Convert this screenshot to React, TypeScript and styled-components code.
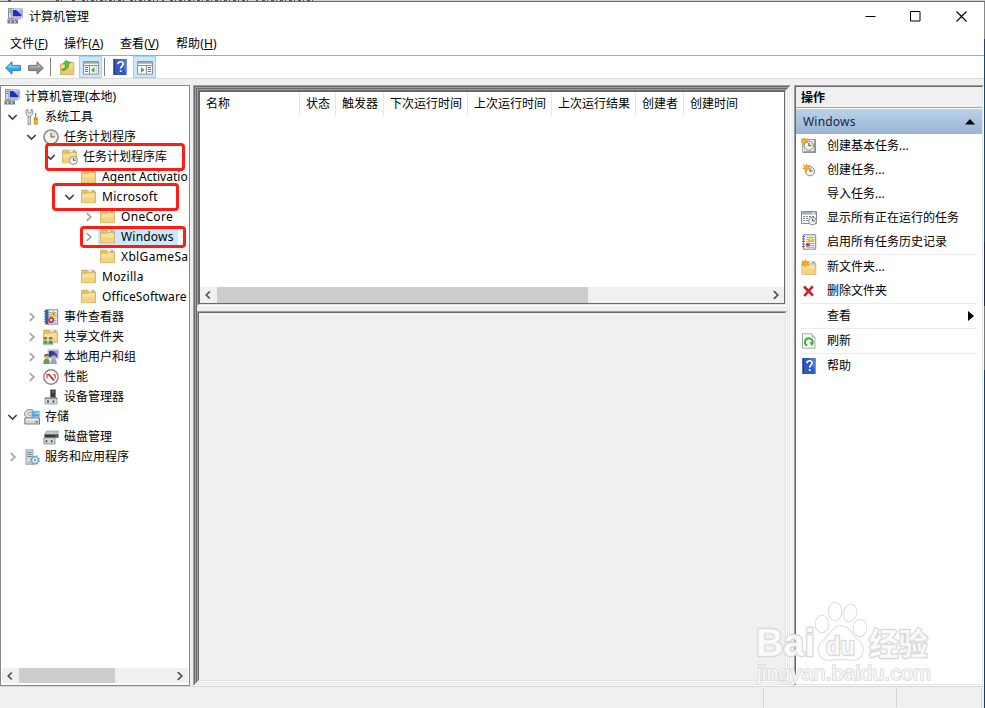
import React from "react";
import styled, { createGlobalStyle, css } from "styled-components";

const Global = createGlobalStyle`
  * { box-sizing: border-box; }
  html, body { margin: 0; padding: 0; overflow: hidden; }
  body {
    font-family: "Noto Sans", "Noto Sans CJK SC", sans-serif;
    font-size: 12px;
    color: #000;
    background: #fff;
  }
  svg { display: block; flex: none; }
`;

/* ---------- icons ---------- */

const Svg = ({ children, size = 16 }: { children: React.ReactNode; size?: number }) => (
  <svg width={size} height={size} viewBox="0 0 16 16">{children}</svg>
);

const FolderShape = () => (
  <>
    <path d="M.8 1.2h5.6l1.2 1.3h6.6v10.9H.8z" fill="#e6c46a" stroke="#c49c48" strokeWidth=".8" />
    <path d="M7.8 1h6v2.4h-6z" fill="#fff" stroke="#c8b27c" strokeWidth=".5" />
    <path d="M10.6 1.6H13v1.2h-2.4z" fill="#3e9be0" />
    <path d="M.6 4.2h6.7l1-.8h6v10.3H.6z" fill="#f8e09b" stroke="#cfa851" strokeWidth=".7" />
    <path d="M1 8.5h13v4.8H1z" fill="#f2d381" />
  </>
);

const ClockShape = ({ cx = 8, cy = 8, r = 7 }) => (
  <>
    <circle cx={cx} cy={cy} r={r} fill="#f6f3e8" stroke="#858b90" strokeWidth={r > 5 ? 1.6 : 1} />
    <path d={`M${cx} ${cy}V${cy - r * 0.7}A${r * 0.7} ${r * 0.7} 0 0 1 ${cx + r * 0.7} ${cy}z`} fill="#f5d9a0" />
    <path d={`M${cx} ${cy - r * 0.6}V${cy}H${cx + r * 0.55}`} fill="none" stroke="#3f5f86" strokeWidth="1" />
  </>
);

const SparkShape = ({ cx = 4, cy = 4 }) => (
  <g transform={`translate(${cx} ${cy})`}>
    <path d="M0-4 1-1.3 3.5-2.6 1.9 0 4 1.5 1 1.4 0 4-1.1 1.4-4 1.4-1.9-.2-3.4-2.9-.9-1.4z" fill="#f59b13" stroke="#f59b13" strokeWidth=".6" />
    <circle r="1.2" fill="#ffc04b" />
  </g>
);

const PersonShape = ({ x = 0, color = "#5f9d4b" }) => (
  <g transform={`translate(${x} 0)`}>
    <path d="M.4 15c0-4 1.2-5.2 3.2-5.2S6.8 11 6.8 15z" fill={color} />
    <circle cx="3.6" cy="7.5" r="2.4" fill="#d9a679" />
    <path d="M1.2 7.5C.8 4.5 6 3.8 6.2 7.3 5 6 3 6 1.2 7.5z" fill="#51361f" />
  </g>
);

const NoteShape = () => (
  <>
    <path d="M2.5.8h12.2v14.4H2.5z" fill="#f1f5fa" stroke="#7388a5" />
    <path d="M5.5 3.5h8M5.5 5.5h8M5.5 7.5h8M5.5 9.5h8M5.5 11.5h8M5.5 13.3h8" stroke="#7e9cc4" strokeWidth=".8" />
    <path d="M1 2.5h3M1 5h3M1 7.5h3M1 10h3M1 12.5h3" stroke="#6a7077" strokeWidth="1" />
  </>
);

const icons: Record<string, React.ReactNode> = {
  computer: (
    <Svg>
      <path d="M1.5.5h5v10h-5z" fill="#d6d9dc" stroke="#8b9095" />
      <path d="M2.5 2.5h3M2.5 4.5h3" stroke="#777" />
      <path d="M4.5.7h11v9h-11z" fill="#d8dde4" stroke="#9aa2ad" strokeWidth=".7" />
      <path d="M5.8 2h8.6v6.3H5.8z" fill="#1b2fc6" />
      <path d="M9 2h5.4v5z" fill="#9fb3f3" />
      <path d="M8 9.5h5l1.5 2H7z" fill="#b1b5ba" />
      <path d="M.5 11h10.5v4.5H.5z" fill="#707b82" />
      <path d="M.5 11h10.5v1.5H.5z" fill="#aab1b6" />
      <path d="M3 13h1.5v1.5H3zM7 13h1.5v1.5H7z" fill="#e8ecee" />
    </Svg>
  ),
  tools: (
    <Svg>
      <path d="M4 7.5h2.6v8H4z" fill="#d3d5d6" stroke="#84898c" strokeWidth=".8" />
      <path d="M2 1.2v3.6L4 7.7h2.6l2.2-2.9V1.2L7 .5V4H4V.5z" fill="#e3e5e6" stroke="#7d8285" strokeWidth=".8" />
      <path d="M11.7 4v5" stroke="#8a8a8a" strokeWidth="1.3" />
      <path d="M10.2 8.5h3v6.7h-3z" fill="#f4b72c" stroke="#c88812" strokeWidth=".8" />
      <path d="M10.2 10.3h3" stroke="#9c6a08" strokeWidth=".7" />
    </Svg>
  ),
  clock: <Svg><ClockShape /></Svg>,
  folder: <Svg><FolderShape /></Svg>,
  folderClock: <Svg><FolderShape /><ClockShape cx={11.4} cy={11.4} r={4} /></Svg>,
  event: (
    <Svg>
      <NoteShape />
      <path d="M2.5 1h3v14h-3z" fill="#3f5f95" />
      <path d="M10.5 2l3.3 5.5H7.2z" fill="#ffd52e" stroke="#d49f12" strokeWidth=".5" />
      <path d="M10.5 4v1.7" stroke="#333" strokeWidth=".8" />
      <circle cx="8.2" cy="11" r="3" fill="#d8323b" />
      <path d="M7 9.8l2.4 2.4M9.4 9.8L7 12.2" stroke="#fff" />
    </Svg>
  ),
  shared: (
    <Svg>
      <FolderShape />
      <g transform="translate(0 5) scale(.66)"><PersonShape color="#3da56a" /><PersonShape x={8} color="#3d87a5" /></g>
      <path d="M0 15h10" stroke="#63be84" strokeWidth="1.4" />
    </Svg>
  ),
  users: (
    <Svg>
      <path d="M5 .8h10.3v8.5H5z" fill="#c5ccd6" stroke="#98a1ad" strokeWidth=".6" />
      <path d="M6 2h8.2v6H6z" fill="#2037bd" />
      <path d="M10 2h4.2v4z" fill="#8294e6" />
      <PersonShape /><PersonShape x={7} color="#8fa6c8" />
    </Svg>
  ),
  performance: (
    <Svg>
      <circle cx="8" cy="8" r="7.2" fill="#fff" stroke="#858585" strokeWidth="1.4" />
      <path d="M4 9.5V5.5h2M10.5 5l1.7 1.5v3" fill="none" stroke="#c92530" strokeWidth="1.1" />
      <path d="M5.5 5l5.5 6.5" stroke="#e01b22" strokeWidth="1.9" />
    </Svg>
  ),
  device: (
    <Svg>
      <path d="M7.5.8h5V9h-5z" fill="#363b3e" stroke="#666" strokeWidth=".6" />
      <path d="M9.5 2.2H11v1.6H9.5z" fill="#3ddc45" />
      <path d="M2 9h12v6H2z" fill="#d9dcdd" stroke="#878b8e" strokeWidth=".8" />
      <path d="M1.7 8.5h12.6v1.6H1.7z" fill="#8b9093" />
      <path d="M4 11.5h2v2H4zM9.5 11.5h2v2h-2z" fill="#45494c" />
    </Svg>
  ),
  storage: (
    <Svg>
      <ellipse cx="6" cy="5" rx="5.5" ry="4.5" fill="#d9dddf" stroke="#8b9296" />
      <circle cx="6" cy="5" r="1.5" fill="#fff" stroke="#7a8790" strokeWidth=".7" />
      <path d="M7.5 2h8.2v6H7.5z" fill="#4ba9d2" stroke="#c0c9cf" strokeWidth=".8" />
      <path d="M8.3 5l6.5-2v2z" fill="#a9e2f5" />
      <path d="M.8 9h14.7v6H.8z" fill="#d5d8da" stroke="#6b7175" strokeWidth=".9" />
      <path d="M2 10.3h12" stroke="#f9f9f9" />
      <path d="M11.5 12h2.5v1.6h-2.5z" fill="#28b32c" />
    </Svg>
  ),
  disk: (
    <Svg>
      <path d="M3.5 2h12l-1 4h-13z" fill="#c3c7c9" stroke="#8c9194" strokeWidth=".6" />
      <path d="M1.5 5.5h14v3.2h-14z" fill="#33383a" />
      <path d="M12.3 6.5h2v1h-2z" fill="#47d847" />
      <path d="M.8 8.9H12v6H.8z" fill="#d8dbdc" stroke="#7c8184" strokeWidth=".8" />
      <path d="M2.5 11.3h1.8v2H2.5zM7.8 11.3h1.8v2H7.8z" fill="#45494c" />
    </Svg>
  ),
  services: (
    <Svg>
      <path d="M2 .8h7v14.5H2z" fill="#d2dadd" stroke="#879299" strokeWidth=".8" />
      <path d="M3.3 3.5h4.5M3.3 5.5h4.5M3.3 7.5h4.5" stroke="#637984" strokeWidth=".9" />
      <circle cx="11" cy="11.2" r="3.4" fill="#e1eef7" stroke="#7fa5c3" strokeWidth="1.5" />
      <circle cx="11" cy="11.2" r="4.3" fill="none" stroke="#7fa5c3" strokeWidth="1.3" strokeDasharray="1.7 1.7" />
      <circle cx="11" cy="11.2" r="1.1" fill="#6d94b3" />
      <circle cx="5.4" cy="13.8" r="1.7" fill="#a8c4d9" />
    </Svg>
  ),
  back: (
    <Svg>
      <path d="M.6 9L7 2.8v3.6h8.4v5.2H7v3.6z" fill="#37a6e3" stroke="#2378af" strokeWidth=".9" />
      <path d="M2.3 8.6L6.2 4.8v2.4h8.2v1.4z" fill="#8cd8f7" />
    </Svg>
  ),
  forward: (
    <Svg>
      <path d="M15.4 9L9 2.8v3.6H.6v5.2H9v3.6z" fill="#8c8f90" stroke="#66696a" strokeWidth=".9" />
      <path d="M13.7 8.6L9.8 4.8v2.4H1.6v1.4z" fill="#b5b8b9" />
    </Svg>
  ),
  up: (
    <Svg>
      <path d="M1.5 5h5l1-1.5h7.3V15.5H1.5z" fill="#f6d987" stroke="#cba24f" strokeWidth=".8" />
      <path d="M2 10h12.4v5H2z" fill="#ecc974" />
      <path d="M2.8 10.2c3.2-.8 4.2-3 3.4-5.6L4 4.9 6.8 1.6l5 2L9.5 4.4c.7 4-2 6.6-5.9 7.4z" fill="#5bc63d" stroke="#2f8b25" strokeWidth=".6" />
    </Svg>
  ),
  help: (
    <Svg>
      <path d="M1.5 0h13v16h-13z" fill="#3358c0" />
      <path d="M1.5 0H3v16H1.5z" fill="#23388d" />
      <path d="M8.5 0h6v16z" fill="#4d78d4" />
      <path d="M6 5.3C6 2 11.2 2.1 11.1 5c0 2-2.4 2.2-2.4 4.4" fill="none" stroke="#fff" strokeWidth="1.6" />
      <path d="M7.8 11.2h1.8V13H7.8z" fill="#fff" />
    </Svg>
  ),
  paneLeft: (
    <Svg>
      <path d="M.5 2.5h15v12.7H.5z" fill="#f7f7f7" stroke="#8d9196" />
      <path d="M1 3h14v1.7H1z" fill="#a4a9ae" /><path d="M1 6.5h14M6.5 7v8" stroke="#8d9196" />
      <path d="M2 8.5h3M2 10.5h3M2 12.5h3" stroke="#4b73aa" />
      <path d="M8 11L11.5 8.2v5.6z" fill="#37af36" />
      <path d="M13.2 7v8" stroke="#c6cacd" />
    </Svg>
  ),
  paneRight: (
    <Svg>
      <path d="M.5 2.5h15v12.7H.5z" fill="#f7f7f7" stroke="#8d9196" />
      <path d="M1 3h14v1.7H1z" fill="#a4a9ae" /><path d="M1 6.5h14M9.5 7v8" stroke="#8d9196" />
      <path d="M11 8.5h3M11 10.5h3M11 12.5h3" stroke="#4b73aa" />
      <path d="M7.5 11L4 8.2v5.6z" fill="#37af36" />
    </Svg>
  ),
  basicTask: (
    <Svg>
      <path d="M1.7 1.5h12.8v13H1.7z" fill="#e9e9e6" stroke="#95999c" />
      <path d="M13.8 2v12H3" fill="none" stroke="#8c8f90" strokeWidth="1.3" />
      <ClockShape cx={7.8} cy={7.7} r={4.6} /><SparkShape cx={3} cy={3.2} />
    </Svg>
  ),
  task: <Svg><ClockShape cx={9} cy={9.2} r={4.6} /><SparkShape cx={5.5} cy={5.6} /></Svg>,
  running: (
    <Svg>
      <path d="M.5 1.5h15v12H.5z" fill="#fff" stroke="#858b91" />
      <path d="M1 2h14v2.5H1z" fill="#a4abb3" />
      <path d="M11 3h3" stroke="#fff" />
      <path d="M2 6.5h12M2 8.5h12M2 10.5h12" stroke="#7e8791" strokeDasharray="2 1" />
      <ClockShape cx={11.5} cy={11} r={3.9} />
    </Svg>
  ),
  history: (
    <Svg>
      <NoteShape />
      <path d="M10 2l3 5H7z" fill="#ffda3d" stroke="#d7a316" strokeWidth=".5" />
      <circle cx="6.8" cy="10.8" r="2" fill="#d7333c" />
    </Svg>
  ),
  newFolder: <Svg><g transform="translate(.4 1.5)"><FolderShape /></g><SparkShape cx={4.3} cy={4.6} /></Svg>,
  remove: <Svg><path d="M3 3.5l9 9.2M11.7 3.3L3.2 13" stroke="#cf1d24" strokeWidth="2.6" /></Svg>,
  refresh: (
    <Svg>
      <path d="M1.5.8h9.5l3 3.3v11.1H1.5z" fill="#fafafa" stroke="#a0a0a0" strokeWidth=".9" />
      <path d="M11 .8v3.3h3" fill="#e5e5e5" stroke="#a0a0a0" strokeWidth=".8" />
      <path d="M6.2 12.6A3.8 3.8 0 1 1 11.6 9.5" fill="none" stroke="#2fb139" strokeWidth="1.9" />
      <path d="M8.4 9.3h5L10.7 13z" fill="#2fb139" />
    </Svg>
  ),
};

const Chevron = ({ dir, color = "#404040" }: { dir: "down" | "right" | "left"; color?: string }) => {
  const d = { down: "M1.3 3 5.5 7 9.7 3", right: "M3.8 1.2 7.8 5 3.8 8.8", left: "M6.8 1.5 3.3 5 6.8 8.5" }[dir];
  return (
    <svg width="11" height="10" viewBox="0 0 11 10">
      <path d={d} fill="none" stroke={color} strokeWidth="1.7" />
    </svg>
  );
};

/* ---------- window frame ---------- */

const Screen = styled.div`
  width: 985px;
  height: 708px;
  display: grid;
  grid-template: 2px 706px / 984px 1px;
  overflow: hidden;
`;
const BackdropStrip = styled.div`
  grid-column: 1 / 3;
  background: #d2d2d2;
  border-bottom: 1px solid #6b6b6b;
`;
const BackdropEdge = styled.div`
  background: linear-gradient(#888 0 37px, #22406a 37px 52px, #0c4a6e 52px 240px, #1b2b4a 240px 304px, #777 304px 368px, #123e6b 368px);
`;
const Window = styled.div`
  display: flex;
  flex-direction: column;
  background: #f0f0f0;
`;
const TitleBar = styled.div`
  height: 31px;
  display: flex;
  align-items: center;
  padding: 0 0 3px 7px;
  background: #fff;
`;
const Title = styled.span`
  flex: 1;
  padding: 2px 0 0 6px;
  line-height: 18px;
`;
const Caption = styled.div`
  width: 45.6px;
  display: flex;
  justify-content: center;
`;
const MenuBar = styled.div`
  height: 22px;
  display: flex;
  padding-left: 10px;
  background: #fff;
  line-height: 22px;
`;
const MenuItem = styled.div<{ $w: number }>`
  width: ${(p) => p.$w}px;
  white-space: nowrap;
  letter-spacing: 0.1px;
  u { text-underline-offset: 1px; }
`;
const ToolBar = styled.div`
  height: 24px;
  display: flex;
  align-items: center;
  padding-left: 5px;
  background: #fff;
  border-top: 1px solid #a9a9ad;
  border-bottom: 1px solid #dadada;
`;
const ToolButton = styled.div<{ $w: number; $on?: boolean }>`
  width: ${(p) => p.$w}px;
  height: 22px;
  display: flex;
  align-items: center;
  justify-content: ${(p) => (p.$on ? "center" : "flex-start")};
  ${(p) => p.$on && css`background: #cce8ff; border: 1px solid #99d1ff;`}
`;
const ToolDivider = styled.div<{ $gap: number }>`
  width: 1px;
  height: 18px;
  margin-right: ${(p) => p.$gap}px;
  background: #7d7d7d;
`;
const Body = styled.div`
  height: 607px;
  display: flex;
  padding-top: 6px;
`;

/* ---------- tree ---------- */

const TreePanel = styled.div`
  position: relative;
  width: 190px;
  height: 601px;
  margin-right: 3px;
  padding: 1px 1px 2px;
  display: flex;
  flex-direction: column;
  border: 1px solid #828790;
  background: #fff;
`;
const TreeRows = styled.div`
  flex: 1;
  overflow: hidden;
`;
const TreeRow = styled.div<{ $level: number }>`
  height: 20px;
  display: flex;
  align-items: center;
  padding-left: ${(p) => (p.$level === 0 ? 0 : p.$level * 19 - 14)}px;
`;
const Toggle = styled.div`
  flex: none;
  width: 15px;
  display: flex;
  align-items: center;
`;
const Node = styled.div<{ $selected?: boolean }>`
  flex: none;
  height: 20px;
  display: flex;
  align-items: center;
  padding: 0 4px 0 2px;
  gap: 5px;
  white-space: nowrap;
  background: ${(p) => (p.$selected ? "#cce8ff" : "transparent")};
`;
const NodeText = styled.span<{ $spacing: number }>`
  line-height: 20px;
  letter-spacing: ${(p) => p.$spacing}px;
`;
const Marker = styled.div<{ $x: number; $y: number; $w: number; $h: number }>`
  position: absolute;
  left: ${(p) => p.$x}px;
  top: ${(p) => p.$y}px;
  width: ${(p) => p.$w}px;
  height: ${(p) => p.$h}px;
  border: 3px solid #fe1c14;
  border-radius: 4px;
`;
const ScrollBar = styled.div<{ $h: number }>`
  height: ${(p) => p.$h}px;
  display: flex;
  align-items: center;
  background: #f0f0f0;
`;
const ScrollArrow = styled.div<{ $end?: boolean }>`
  width: 17px;
  display: flex;
  justify-content: center;
  margin-left: ${(p) => (p.$end ? "auto" : 0)};
`;
const Thumb = styled.div<{ $w: number }>`
  width: ${(p) => p.$w}px;
  align-self: stretch;
  background: #cdcdcd;
`;

/* ---------- centre ---------- */

const Sunken = styled.div`
  border: 1px solid;
  border-color: #a0a0a0 #fff #fff #a0a0a0;
  display: flex;
`;
const SunkenInner = styled.div`
  flex: 1;
  min-width: 0;
  display: flex;
  flex-direction: column;
  border: 1px solid;
  border-color: #696969 #e3e3e3 #e3e3e3 #696969;
`;
const Centre = styled(Sunken)`
  width: 598px;
  height: 601px;
  margin-right: 3px;
`;
const CentreFill = styled(Sunken)`flex: 1;`;
const ListFrame = styled(Sunken)`
  height: 217px;
  margin-bottom: 5px;
`;
const DetailFrame = styled(Sunken)`flex: 1;`;
const ListView = styled.div`
  flex: 1;
  display: flex;
  flex-direction: column;
  justify-content: space-between;
  border: 1px solid #696969;
  background: #fff;
`;
const HeaderRow = styled.div`
  height: 24px;
  display: flex;
`;
const HeaderCell = styled.div<{ $w: number }>`
  width: ${(p) => p.$w}px;
  padding-left: 6px;
  line-height: 24px;
  white-space: nowrap;
  border-right: 1px solid #e5e5e5;
  &:last-child { border-right: 0; }
`;

/* ---------- actions ---------- */

const Actions = styled(Sunken)`
  width: 190px;
  height: 601px;
`;
const ActionsInner = styled(SunkenInner)`background: #fff;`;
const ActionsTitle = styled.div`
  height: 21px;
  margin-bottom: 1px;
  padding-left: 5px;
  font-weight: 700;
  line-height: 21px;
  background: #f0f0f0;
  border-bottom: 1px solid #a0a0a0;
`;
const ActionsGroup = styled.div`
  height: 25px;
  display: flex;
  align-items: center;
  justify-content: space-between;
  padding: 0 7px 0 7px;
  letter-spacing: 0.2px;
  color: #14284a;
  background: linear-gradient(#bad2eb, #9ab4d3);
`;
const ActionRow = styled.div`
  height: 24px;
  display: flex;
  align-items: center;
  padding: 0 8px 0 5px;
  white-space: nowrap;
`;
const ActionIcon = styled.div`
  width: 26px;
`;
const ActionText = styled.span`
  flex: 1;
  line-height: 22px;
`;
const Separator = styled.div`
  height: 1px;
  margin: 0 5px;
  background: #ebebeb;
`;
const StatusBar = styled.div`
  height: 22px;
  display: flex;
  border-top: 1px solid #d7d7d7;
`;
const StatusCell = styled.div<{ $w: number }>`
  width: ${(p) => p.$w}px;
  margin-top: 1px;
  height: 19px;
  border-right: 1px solid #d4d4d4;
`;
const Watermark = styled.svg`
  position: absolute;
  left: 750px;
  top: 596px;
  font-family: "Liberation Sans", "Noto Sans CJK SC", sans-serif;
  paint-order: stroke;
`;

type TreeItem = [level: number, icon: string, text: string, state?: "open" | "closed", selected?: boolean, spacing?: number];
const tree: TreeItem[] = [
  [0, "computer", "计算机管理(本地)"],
  [1, "tools", "系统工具", "open"],
  [2, "clock", "任务计划程序", "open"],
  [3, "folderClock", "任务计划程序库", "open"],
  [4, "folder", "Agent Activatio", undefined, false, 0.05],
  [4, "folder", "Microsoft", "open", false, 0.3],
  [5, "folder", "OneCore", "closed", false, 0.3],
  [5, "folder", "Windows", "closed", true, 0.2],
  [5, "folder", "XblGameSa", undefined, false, 0.35],
  [4, "folder", "Mozilla", undefined, false, 0.3],
  [4, "folder", "OfficeSoftware", undefined, false, 0.1],
  [2, "event", "事件查看器", "closed"],
  [2, "shared", "共享文件夹", "closed"],
  [2, "users", "本地用户和组", "closed"],
  [2, "performance", "性能", "closed"],
  [2, "device", "设备管理器"],
  [1, "storage", "存储", "open"],
  [2, "disk", "磁盘管理"],
  [1, "services", "服务和应用程序", "closed"],
];

const columns: [string, number][] = [
  ["名称", 100], ["状态", 36], ["触发器", 48], ["下次运行时间", 84],
  ["上次运行时间", 84], ["上次运行结果", 84], ["创建者", 48], ["创建时间", 80],
];

const actions: ([string | null, string, boolean?] | "-")[] = [
  ["basicTask", "创建基本任务..."], ["task", "创建任务..."], [null, "导入任务..."],
  ["running", "显示所有正在运行的任务"], ["history", "启用所有任务历史记录"], "-",
  ["newFolder", "新文件夹..."], ["remove", "删除文件夹"], "-",
  [null, "查看", true], "-", ["refresh", "刷新"], "-", ["help", "帮助"],
];

const menus: [string, string, number][] = [
  ["文件", "F", 54], ["操作", "A", 56], ["查看", "V", 56], ["帮助", "H", 56],
];

export default function App() {
  return (
    <>
      <Global />
      <Screen>
        <BackdropStrip>
          <svg width="320" height="1"><path d="M8 .5h4M56 .5h9M72 .5h5M82 .5h44M130 .5h28M162 .5h2M170 .5h80M256 .5h2M262 .5h52" stroke="#555" strokeDasharray="3 2 1 3" /></svg>
        </BackdropStrip>
        <Window>
          <TitleBar>
            {icons.computer}
            <Title>计算机管理</Title>
            <Caption><svg width="11" height="11"><path d="M.5 5.5h10" stroke="#000" /></svg></Caption>
            <Caption><svg width="11" height="11"><path d="M.5.5h9.5v9.5H.5z" fill="none" stroke="#000" /></svg></Caption>
            <Caption><svg width="11" height="11"><path d="M.5.5l10 10M10.5.5l-10 10" stroke="#000" strokeWidth="1.1" /></svg></Caption>
          </TitleBar>
          <MenuBar>
            {menus.map(([t, k, w]) => <MenuItem key={k} $w={w}>{t}(<u>{k}</u>)</MenuItem>)}
          </MenuBar>
          <ToolBar>
            <ToolButton $w={23}>{icons.back}</ToolButton>
            <ToolButton $w={22}>{icons.forward}</ToolButton>
            <ToolDivider $gap={8} />
            <ToolButton $w={20}>{icons.up}</ToolButton>
            <ToolButton $w={23} $on>{icons.paneLeft}</ToolButton>
            <ToolButton $w={2} />
            <ToolDivider $gap={7} />
            <ToolButton $w={21}>{icons.help}</ToolButton>
            <ToolButton $w={23} $on>{icons.paneRight}</ToolButton>
          </ToolBar>
          <Body>
            <TreePanel>
              <TreeRows>
                {tree.map(([level, icon, text, state, selected, spacing = 0]) => (
                  <TreeRow key={text} $level={level}>
                    {level > 0 && (
                      <Toggle>
                        {state && <Chevron dir={state === "open" ? "down" : "right"} color={state === "open" ? "#404040" : "#a2a2a2"} />}
                      </Toggle>
                    )}
                    <Node $selected={selected}>
                      {icons[icon]}
                      <NodeText $spacing={spacing}>{text}</NodeText>
                    </Node>
                  </TreeRow>
                ))}
              </TreeRows>
              <ScrollBar $h={15}>
                <ScrollArrow><Chevron dir="left" color="#505050" /></ScrollArrow>
                <Thumb $w={96} />
                <ScrollArrow $end><Chevron dir="right" color="#505050" /></ScrollArrow>
              </ScrollBar>
              <Marker $x={44} $y={57} $w={140} $h={28} />
              <Marker $x={51} $y={97} $w={127} $h={28} />
              <Marker $x={79} $y={140} $w={106} $h={22} />
            </TreePanel>
            <Centre><SunkenInner>
              <CentreFill><SunkenInner>
                <ListFrame><SunkenInner>
                  <ListView>
                    <HeaderRow>{columns.map(([t, w]) => <HeaderCell key={t} $w={w}>{t}</HeaderCell>)}</HeaderRow>
                    <ScrollBar $h={16}>
                      <ScrollArrow><Chevron dir="left" color="#505050" /></ScrollArrow>
                      <Thumb $w={371} />
                      <ScrollArrow $end><Chevron dir="right" color="#505050" /></ScrollArrow>
                    </ScrollBar>
                  </ListView>
                </SunkenInner></ListFrame>
                <DetailFrame><SunkenInner /></DetailFrame>
              </SunkenInner></CentreFill>
            </SunkenInner></Centre>
            <Actions><ActionsInner>
              <ActionsTitle>操作</ActionsTitle>
              <ActionsGroup>
                Windows
                <svg width="10" height="6"><path d="M5 0l5 5.5H0z" fill="#000" /></svg>
              </ActionsGroup>
              {actions.map((a, i) => a === "-" ? <Separator key={i} /> : (
                <ActionRow key={i}>
                  <ActionIcon>{a[0] && icons[a[0]]}</ActionIcon>
                  <ActionText>{a[1]}</ActionText>
                  {a[2] && <svg width="6" height="10"><path d="M0 0l6 5-6 5z" fill="#000" /></svg>}
                </ActionRow>
              ))}
            </ActionsInner></Actions>
          </Body>
          <StatusBar>
            <StatusCell $w={764} />
            <StatusCell $w={133} />
            <StatusCell $w={85} />
          </StatusBar>
        </Window>
        <BackdropEdge />
      </Screen>
      <Watermark width="190" height="96" fill="#fff" fillOpacity=".8" stroke="#d8d8d8" strokeWidth="2.4" strokeLinejoin="round">
        <ellipse cx="72" cy="28" rx="6.5" ry="8.5" strokeWidth="1.5" />
        <ellipse cx="85" cy="15.5" rx="6.5" ry="9" strokeWidth="1.5" />
        <ellipse cx="100" cy="17" rx="6.5" ry="8.5" transform="rotate(14 100 17)" strokeWidth="1.5" />
        <ellipse cx="110" cy="32" rx="6.5" ry="8.5" strokeWidth="1.5" />
        <path d="M91 30c8 0 10 8 17 14 9 8 5 21-6 20-7-1-15-1-21 0-13 1-16-12-8-19 7-6 10-15 18-15z" strokeWidth="1.5" />
        <text x="6" y="60" fontSize="39" fontWeight="700" textLength="59" lengthAdjust="spacingAndGlyphs">Bai</text>
        <text x="76" y="59" fontSize="26" fontWeight="700" textLength="29" lengthAdjust="spacingAndGlyphs">du</text>
        <text x="119" y="59" fontSize="31" fontWeight="700" textLength="59" lengthAdjust="spacingAndGlyphs">经验</text>
        <text x="7" y="84" fontSize="20" strokeWidth="1.5" textLength="174" lengthAdjust="spacingAndGlyphs">jingyan.baidu.com</text>
      </Watermark>
    </>
  );
}
